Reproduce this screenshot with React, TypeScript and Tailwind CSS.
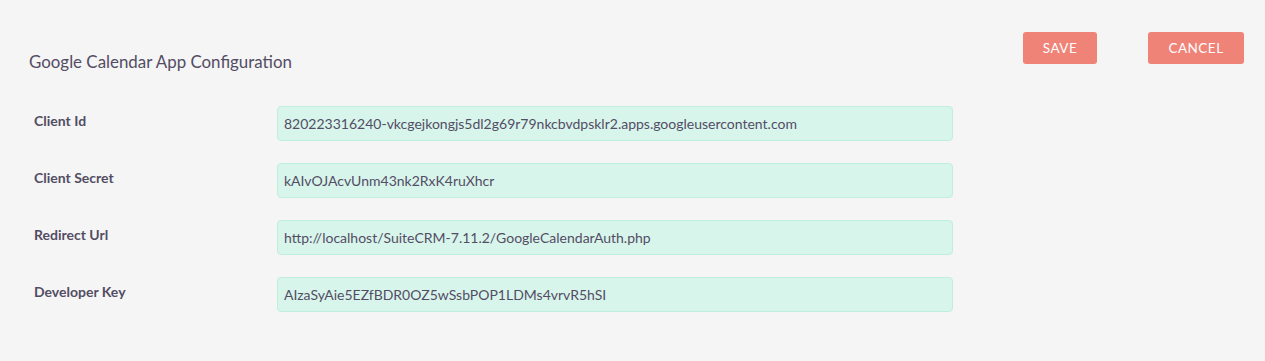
const FIELDS = [
  { label: "Client Id", value: "820223316240-vkcgejkongjs5dl2g69r79nkcbvdpsklr2.apps.googleusercontent.com" },
  { label: "Client Secret", value: "kAIvOJAcvUnm43nk2RxK4ruXhcr" },
  { label: "Redirect Url", value: "http://localhost/SuiteCRM-7.11.2/GoogleCalendarAuth.php" },
  { label: "Developer Key", value: "AIzaSyAie5EZfBDR0OZ5wSsbPOP1LDMs4vrvR5hSI" },
];

export default function App() {
  return (
    <div className="h-[361px] w-full bg-[#f5f5f5] font-['Lato',sans-serif] text-[#534d64]">
      <div className="flex items-start justify-between pt-[32px] pr-[21px]">
        <h1 className="pl-[29px] pt-[18px] text-[16.9px] leading-[24px] font-normal">
          Google Calendar App Configuration
        </h1>
        <div className="flex gap-[51px]">
          <button
            type="button"
            className="h-[32px] w-[74px] rounded-[3px] bg-[#f08377] text-[13.5px] tracking-[0.5px] text-white"
          >
            SAVE
          </button>
          <button
            type="button"
            className="h-[32px] w-[96px] rounded-[3px] bg-[#f08377] text-[13.5px] tracking-[0.5px] text-white"
          >
            CANCEL
          </button>
        </div>
      </div>

      <div className="mt-[32px] flex flex-col gap-[22px]">
        {FIELDS.map((f) => (
          <div key={f.label} className="flex items-center">
            <label className="w-[277px] pl-[34px] pb-[7px] text-[14px] font-bold text-[#534d64]">
              {f.label}
            </label>
            <input
              readOnly
              value={f.value}
              className="h-[35px] w-[676px] rounded-[4px] border border-[#bfeedd] bg-[#d8f5ec] px-[6px] text-[14px] text-[#534d64] outline-none"
            />
          </div>
        ))}
      </div>
    </div>
  );
}
